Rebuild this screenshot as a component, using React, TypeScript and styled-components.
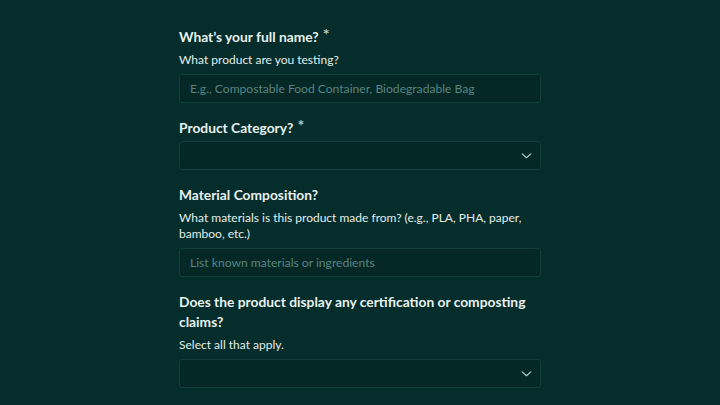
import styled, { createGlobalStyle } from "styled-components";

const GlobalStyle = createGlobalStyle`
  html, body {
    margin: 0;
    padding: 0;
    background: #052d2b;
  }
  body {
    font-family: "Lato", "Noto Sans", sans-serif;
    color: #e8f1ef;
  }
`;

const Page = styled.div`
  min-height: 405px;
  padding-top: 27px;
  box-sizing: border-box;
`;

const Form = styled.form`
  width: 362px;
  margin: 0 auto;
  display: flex;
  flex-direction: column;
  gap: 15px;
`;

const Field = styled.div`
  display: flex;
  flex-direction: column;
`;

const Label = styled.label`
  font-size: 13.8px;
  font-weight: 700;
  line-height: 20px;
  letter-spacing: 0;
  margin-bottom: 3px;
`;

const Star = styled.span`
  display: inline-block;
  font-size: 16px;
  margin-left: 4px;
  color: #b4c9c5;
  vertical-align: top;
  line-height: 14px;
`;

const Hint = styled.p`
  margin: 2px 0 6px;
  font-size: 12px;
  line-height: 16px;
  color: #e3eeec;
`;

const TextInput = styled.input`
  box-sizing: border-box;
  height: 29px;
  width: 100%;
  padding: 0 10px;
  border: 1px solid #123f3b;
  border-radius: 3px;
  background: #042826;
  color: #e8f1ef;
  font-family: inherit;
  font-size: 12.1px;
  outline: none;

  &::placeholder {
    color: #5a847f;
  }
`;

const SelectBox = styled.button`
  box-sizing: border-box;
  height: 29px;
  width: 100%;
  padding: 0 7px 0 10px;
  border: 1px solid #123f3b;
  border-radius: 3px;
  background: #042826;
  display: flex;
  align-items: center;
  justify-content: flex-end;
  cursor: pointer;
`;

const Chevron = () => (
  <svg width="13" height="13" viewBox="0 0 24 24" fill="none" stroke="#a9cfca" strokeWidth="2.3" strokeLinecap="round" strokeLinejoin="round">
    <path d="M4 9l8 7 8-7" />
  </svg>
);

const App = () => {
  return (
    <Page>
      <GlobalStyle />
      <Form onSubmit={(e) => e.preventDefault()}>
        <Field>
          <Label>
            What’s your full name?<Star>*</Star>
          </Label>
          <Hint>What product are you testing?</Hint>
          <TextInput placeholder="E.g., Compostable Food Container, Biodegradable Bag" />
        </Field>
        <Field>
          <Label>
            Product Category?<Star>*</Star>
          </Label>
          <SelectBox type="button">
            <Chevron />
          </SelectBox>
        </Field>
        <Field>
          <Label>Material Composition?</Label>
          <Hint>What materials is this product made from? (e.g., PLA, PHA, paper, bamboo, etc.)</Hint>
          <TextInput placeholder="List known materials or ingredients" />
        </Field>
        <Field>
          <Label>Does the product display any certification or composting claims?</Label>
          <Hint>Select all that apply.</Hint>
          <SelectBox type="button">
            <Chevron />
          </SelectBox>
        </Field>
      </Form>
    </Page>
  );
};

export default App;
